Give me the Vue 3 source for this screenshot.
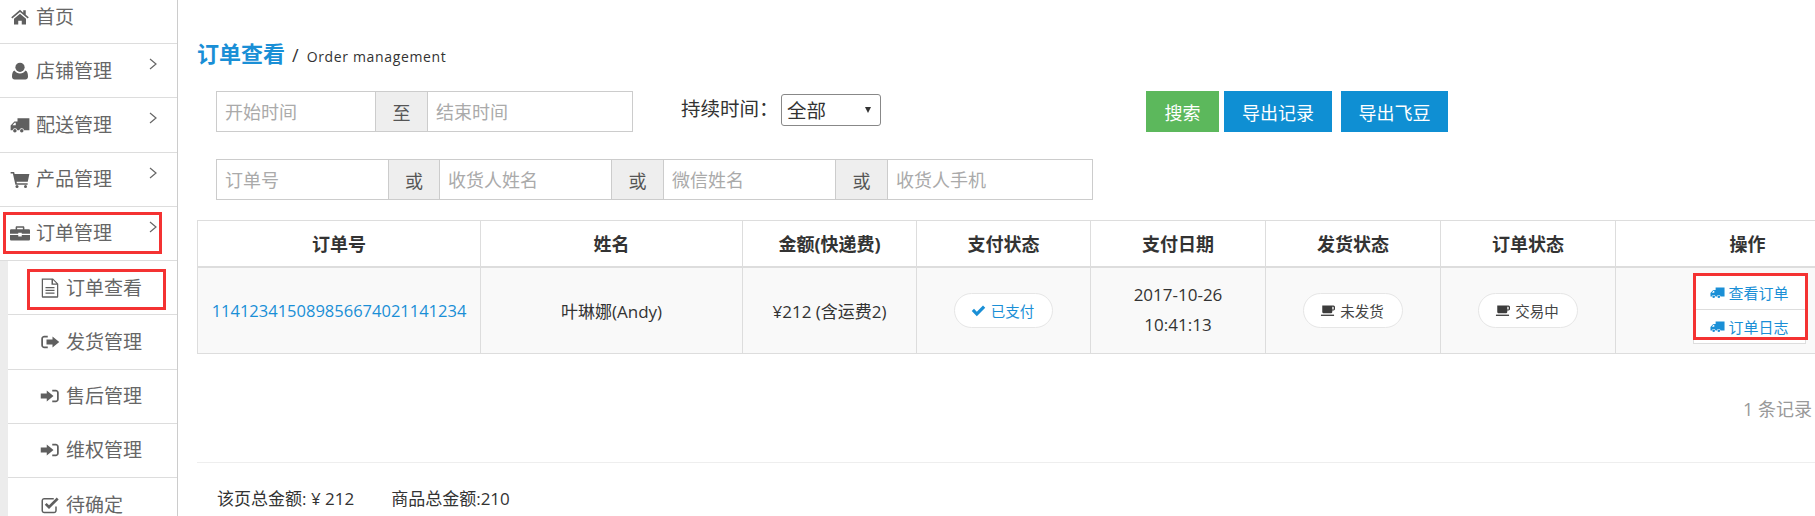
<template>
  <div class="page">
    <aside class="sidebar">
      <div
        v-for="item in menu"
        :key="item.label"
        class="menu-row"
        :class="{ 'is-sub': item.sub, 'is-first': item.first }"
      >
        <svg class="menu-icon" viewBox="0 0 16 16" v-html="icons[item.icon]"></svg>
        <span class="menu-label">{{ item.label }}</span>
        <svg v-if="item.arrow" class="menu-arrow" viewBox="0 0 8 12"><path d="M1 1l6 5-6 5" /></svg>
        <span v-if="item.marked" class="red-box"></span>
      </div>
    </aside>

    <main class="content">
      <h1 class="title"><b>订单查看</b><i>/</i><span>Order management</span></h1>

      <div class="filter-one">
        <div class="group">
          <input class="w158" placeholder="开始时间" />
          <span class="addon w53">至</span>
          <input class="w204" placeholder="结束时间" />
        </div>
        <label class="duration">持续时间：</label>
        <div class="select-wrap">
          <select class="duration-select">
            <option>全部</option>
          </select>
        </div>
        <div class="buttons">
          <button class="btn green">搜索</button>
          <button class="btn blue first">导出记录</button>
          <button class="btn blue">导出飞豆</button>
        </div>
      </div>

      <div class="group second">
        <input class="w171" placeholder="订单号" />
        <span class="addon w52">或</span>
        <input class="w171" placeholder="收货人姓名" />
        <span class="addon w53">或</span>
        <input class="w171" placeholder="微信姓名" />
        <span class="addon w53">或</span>
        <input class="w204" placeholder="收货人手机" />
      </div>

      <table class="orders">
        <thead>
          <tr>
            <th v-for="col in columns" :key="col.name" :style="{ width: col.width + 'px' }">{{ col.name }}</th>
          </tr>
        </thead>
        <tbody>
          <tr>
            <td class="order-no">114123415089856674021141234</td>
            <td>叶琳娜(Andy)</td>
            <td>¥212 (含运费2)</td>
            <td>
              <span class="pill paid">
                <svg viewBox="0 0 16 16" v-html="icons.check"></svg>已支付
              </span>
            </td>
            <td class="pay-date">2017-10-26<br />10:41:13</td>
            <td>
              <span class="pill">
                <svg viewBox="0 0 16 16" v-html="icons.coffee"></svg>未发货
              </span>
            </td>
            <td>
              <span class="pill">
                <svg viewBox="0 0 16 16" v-html="icons.coffee"></svg>交易中
              </span>
            </td>
            <td class="ops-cell">
              <div class="ops">
                <a><svg viewBox="0 0 16 16" v-html="icons.truck"></svg>查看订单</a>
                <a><svg viewBox="0 0 16 16" v-html="icons.truck"></svg>订单日志</a>
                <span class="red-box ops-mark"></span>
              </div>
            </td>
          </tr>
        </tbody>
      </table>

      <div class="record-count">1 条记录</div>
      <div class="totals">
        <span>该页总金额: ¥ 212</span>
        <span>商品总金额:210</span>
      </div>
    </main>
  </div>
</template>

<script setup>
const icons = {
  home: '<path d="M8 2.2 1 8.2l.8 1L8 4l6.2 5.2.8-1-2.4-2V2.6h-2v1.9z"/><path d="M3.2 9.4 8 5.4l4.8 4V14H9.4v-3H6.6v3H3.2z"/>',
  user: '<circle cx="8" cy="5" r="3.7"/><path d="M3.6 7.6C4.6 9.2 6.2 10 8 10s3.4-.8 4.4-2.4c1.5.6 2 2.6 2 5 0 1.3-.9 2.1-2.1 2.1H3.7c-1.2 0-2.1-.8-2.1-2.1 0-2.4.5-4.4 2-5z"/>',
  truck: '<path d="M6 2.6h9.5v9.6h-4.2a2 2 0 0 0-3.9 0H5.9a2 2 0 0 0-3.9 0H.5V8.4l3-3.2H6z"/><path d="M2 8.2h2.6V6.2H3.7z" fill="#fff"/><circle cx="3.9" cy="12.5" r="1.4"/><circle cx="9.4" cy="12.5" r="1.4"/>',
  cart: '<path d="M.5 2.4h2.8l.4 1.6h11.8l-1.3 6.2H5.2l.3 1.2h8.6v1.2H4.3L2.3 3.6H.5z"/><circle cx="5.6" cy="14" r="1.2"/><circle cx="12.4" cy="14" r="1.2"/>',
  briefcase: '<path fill-rule="evenodd" d="M5.4 2.6h5.2c.5 0 .9.4.9.9V5H15c.5 0 1 .4 1 1v2.6H9.4V7.8H6.6v.8H0V6c0-.6.5-1 1-1h3.5V3.5c0-.5.4-.9.9-.9zm.3 1.2V5h4.6V3.8z"/><path d="M0 9.6h6.6v1.2h2.8V9.6H16V13c0 .6-.5 1-1 1H1c-.5 0-1-.4-1-1z"/>',
  file: '<path fill-rule="evenodd" d="M1.4 .3h9l4.2 4.2v10.2c0 .6-.4 1-1 1H2.4c-.6 0-1-.4-1-1zm1 1v13.2h11.2V5.4H9.2V1.3zm8 .3v2.8h2.8z"/><path d="M4.4 7.2h7.2v1H4.4zM4.4 9.4h7.2v1H4.4zM4.4 11.6h7.2v1H4.4z"/>',
  signout: '<path d="M6.2 3H3.4C2.1 3 1 4.1 1 5.4v5.2C1 11.9 2.1 13 3.4 13h2.8v-1.4H3.4c-.6 0-1-.4-1-1V5.4c0-.6.4-1 1-1h2.8z"/><path d="M10 3.6 15.4 8 10 12.4V10H5.2V6H10z"/>',
  signin: '<path d="M9.8 3h2.8C13.9 3 15 4.1 15 5.4v5.2c0 1.3-1.1 2.4-2.4 2.4H9.8v-1.4h2.8c.6 0 1-.4 1-1V5.4c0-.6-.4-1-1-1H9.8z"/><path d="M5.4 3.6 10.8 8l-5.4 4.4V10H.6V6h4.8z"/>',
  checkSquare: '<path d="M3.4 2.4H11v1.2H3.4c-.6 0-1 .4-1 1v7.8c0 .6.4 1 1 1h7.8c.6 0 1-.4 1-1V9.2h1.2v3.2c0 1.2-1 2.2-2.2 2.2H3.4c-1.2 0-2.2-1-2.2-2.2V4.6c0-1.2 1-2.2 2.2-2.2z"/><path d="M7.2 11.2 3.8 7.8l1.5-1.5 1.9 1.9 6.2-6.2 1.5 1.5z"/>',
  check: '<path d="M6.2 14 .8 8.6l2.4-2.4 3 3L12.8 2.6l2.4 2.4z"/>',
  coffee: '<path fill-rule="evenodd" d="M2.4 2.6h12c.9 0 1.6.8 1.6 1.8v1.8c0 1-.7 1.8-1.6 1.8h-1.3v1.2c0 1-.8 1.8-1.8 1.8H4.2c-1 0-1.8-.8-1.8-1.8zm10.7 1.4v3h.9c.4 0 .6-.3.6-.6V4.6c0-.3-.2-.6-.6-.6z"/><path d="M1 12.4h14v1.4H1z"/>'
}

const menu = [
  { label: '首页', icon: 'home', first: true },
  { label: '店铺管理', icon: 'user', arrow: true },
  { label: '配送管理', icon: 'truck', arrow: true },
  { label: '产品管理', icon: 'cart', arrow: true },
  { label: '订单管理', icon: 'briefcase', arrow: true, marked: true },
  { label: '订单查看', icon: 'file', sub: true, marked: true },
  { label: '发货管理', icon: 'signout', sub: true },
  { label: '售后管理', icon: 'signin', sub: true },
  { label: '维权管理', icon: 'signin', sub: true },
  { label: '待确定', icon: 'checkSquare', sub: true }
]

const columns = [
  { name: '订单号', width: 283 },
  { name: '姓名', width: 262 },
  { name: '金额(快递费)', width: 174 },
  { name: '支付状态', width: 174 },
  { name: '支付日期', width: 175 },
  { name: '发货状态', width: 175 },
  { name: '订单状态', width: 175 },
  { name: '操作', width: 264 }
]
</script>

<style>
html,
body {
  overflow: hidden;
  background: #fff;
}
</style>

<style scoped>
.page {
  display: flex;
  width: 1815px;
  height: 516px;
  overflow: hidden;
  font-family: "Open Sans", "Noto Sans CJK SC", sans-serif;
  color: #333;
}
.sidebar {
  flex: none;
  width: 177px;
  height: 516px;
  border-right: 1px solid #ccc;
  overflow: hidden;
}
.menu-row {
  position: relative;
  display: flex;
  align-items: center;
  box-sizing: border-box;
  height: 54.25px;
  padding-left: 10px;
  border-bottom: 1px solid #ddd;
  color: #666;
  font-size: 19px;
}
.menu-row.is-first {
  height: 44px;
  padding-bottom: 9px;
}
.menu-row.is-sub {
  margin-left: 8px;
  padding-left: 32px;
  box-shadow: -8px 0 0 #ececec;
}
.menu-icon {
  flex: none;
  width: 20px;
  height: 20px;
  margin-right: 6px;
  fill: #5f5f5f;
}
.menu-label {
  line-height: 20px;
}
.menu-arrow {
  position: absolute;
  left: 149px;
  top: 14px;
  width: 8px;
  height: 12px;
  fill: none;
  stroke: #666;
  stroke-width: 1.2;
}
.red-box {
  position: absolute;
  left: 3px;
  top: 5px;
  width: 159px;
  height: 42px;
  box-sizing: border-box;
  border: 3px solid #f43232;
  pointer-events: none;
}
.is-sub .red-box {
  left: 19px;
  top: 8px;
  width: 139px;
  height: 41px;
}

.content {
  flex: none;
  width: 1637px;
  padding-left: 19px;
  box-sizing: border-box;
  overflow: hidden;
}
.title {
  display: flex;
  align-items: baseline;
  height: 91px;
  box-sizing: border-box;
  margin: 0;
  padding-top: 38px;
  font-size: 14px;
  font-weight: 400;
  line-height: 30px;
  color: #333;
}
.title b {
  font-size: 22px;
  color: #1a8fd6;
}
.title i {
  margin: 0 8px 0 7px;
  font-style: normal;
  font-size: 18px;
}
.title span {
  letter-spacing: 0.65px;
}
.filter-one {
  display: flex;
  align-items: flex-start;
  height: 68px;
  padding-left: 19px;
}
.group {
  display: flex;
  flex: none;
  height: 41px;
  box-sizing: border-box;
  border: 1px solid #ccc;
}
.group input {
  box-sizing: border-box;
  height: 39px;
  padding: 0 8px;
  border: 0;
  outline: 0;
  background: #fff;
  font: 18px "Open Sans", "Noto Sans CJK SC", sans-serif;
  color: #333;
}
.group input::placeholder {
  color: #aaa;
}
.addon {
  display: flex;
  flex: none;
  align-items: center;
  justify-content: center;
  box-sizing: border-box;
  border-left: 1px solid #ccc;
  border-right: 1px solid #ccc;
  background: #eee;
  font-size: 18px;
  color: #555;
}
.w158 { width: 158px; }
.w171 { width: 171px; }
.w204 { width: 204px; }
.w52 { width: 52px; }
.w53 { width: 53px; }
.duration {
  width: 99px;
  margin: 4px 0 0 48px;
  font-size: 19.5px;
  line-height: 28px;
  white-space: nowrap;
}
.select-wrap {
  position: relative;
  margin-top: 3px;
  margin-left: 1px;
}
.select-wrap::after {
  content: "";
  position: absolute;
  left: 84px;
  top: 13px;
  border-top: 6px solid #333;
  border-left: 3.5px solid transparent;
  border-right: 3.5px solid transparent;
  pointer-events: none;
}
.duration-select {
  display: block;
  width: 100px;
  height: 32px;
  padding: 0 0 0 5px;
  box-sizing: border-box;
  border: 1px solid #888;
  border-radius: 3px;
  background: #fff;
  appearance: none;
  font: 19.5px "Open Sans", "Noto Sans CJK SC", sans-serif;
  color: #333;
}
.buttons {
  display: flex;
  gap: 9px;
  margin-left: 265px;
}
.btn {
  width: 107px;
  height: 41px;
  padding: 0;
  border: 0;
  color: #fff;
  font: 18px "Open Sans", "Noto Sans CJK SC", sans-serif;
}
.btn.green {
  width: 73px;
  margin-right: -4px;
  background: #5cb85c;
}
.btn.blue {
  background: #0f8fd3;
}
.btn.first {
  width: 108px;
}
.second {
  width: 877px;
  margin-left: 19px;
}

.orders {
  width: 1682px;
  margin-top: 20px;
  table-layout: fixed;
  border-collapse: collapse;
  font-size: 17px;
}
.orders th,
.orders td {
  box-sizing: border-box;
  border: 1px solid #ddd;
  text-align: center;
  padding: 0;
}
.orders th {
  height: 46px;
  border-bottom-width: 2px;
  font-size: 18px;
  font-weight: 700;
}
.orders td {
  height: 87px;
  background: #f9f9f9;
}
.order-no {
  color: #1a8fd6;
  font-size: 16.5px;
}
.pay-date {
  line-height: 30px;
}
.pill {
  display: inline-flex;
  align-items: center;
  justify-content: center;
  box-sizing: border-box;
  height: 35px;
  padding: 0 18px 0 16px;
  border: 1px solid #e6e6e6;
  border-radius: 18px;
  background: #fff;
  font-size: 14.5px;
  color: #444;
}
.pill svg {
  width: 15px;
  height: 15px;
  margin-right: 5px;
  fill: #3c3c3c;
}
.pill.paid {
  color: #1a8fd6;
}
.pill.paid svg {
  fill: #1a8fd6;
}
.ops-cell {
  text-align: left !important;
  padding-left: 77px !important;
}
.ops {
  position: relative;
  width: 111px;
  border: 1px solid #ddd;
  border-top: 0;
  background: #fff;
}
.ops a {
  display: flex;
  align-items: center;
  justify-content: center;
  height: 33px;
  color: #1a8fd6;
  font-size: 15px;
}
.ops a + a {
  border-top: 1px solid #ddd;
}
.ops svg {
  width: 15px;
  height: 15px;
  margin-right: 3px;
  fill: #1a8fd6;
}
.ops-mark {
  left: -1px;
  top: -3px;
  width: 115px;
  height: 67px;
}
.record-count {
  margin-top: 41px;
  padding-left: 1546px;
  line-height: 28px;
  font-size: 18px;
  white-space: nowrap;
  color: #999;
}
.totals {
  display: flex;
  gap: 37px;
  margin-top: 39px;
  padding: 24px 0 0 20px;
  border-top: 1px solid #eee;
  font-size: 17px;
  line-height: 24px;
}
</style>
